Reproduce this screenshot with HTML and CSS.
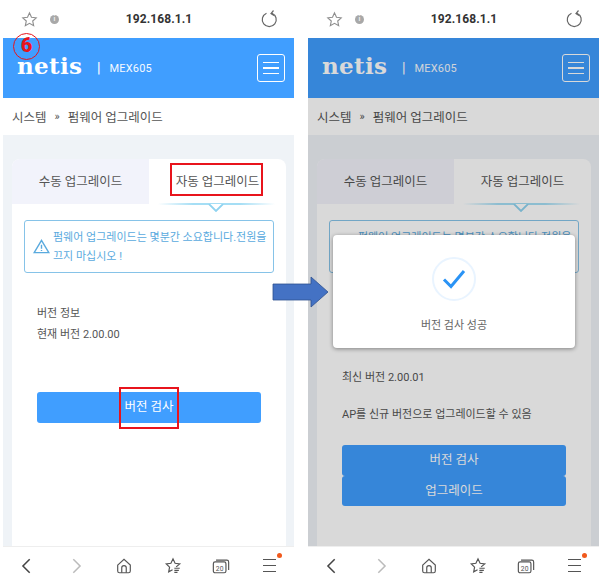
FILE: index.html
```html
<!DOCTYPE html>
<html lang="ko">
<head>
<meta charset="utf-8">
<title>netis MEX605</title>
<link rel="stylesheet" href="styles.css">
</head>
<body>
<div class="stage">
  <section class="phone">
    <div class="chrome">
      <svg class="i-star" viewBox="0 0 18 18"><path d="M9 2l2.100 4.600 5 .6-3.700 3.400 1 4.900L9 13l-4.400 2.500 1-4.900L1.900 7.200l5-.6z"/></svg>
      <span class="info">i</span>
      <span class="url">192.168.1.1</span>
      <svg class="i-reload" viewBox="0 0 18 18"><path d="M6.500 3.200a7 7 0 1 0 5.500 0"/><path d="M13.500 0.500L11 3.500 14 5.500"/></svg>
    </div>
    <header class="header">
      <span class="logo">netis</span>
      <span class="sep">|</span>
      <span class="model">MEX605</span>
      <span class="menu-btn"><i></i><i></i><i></i></span>
    </header>
    <div class="crumbs"><span>시스템</span><span class="raquo">»</span><span>펌웨어 업그레이드</span></div>
    <main class="content">
      <div class="card">
        <div class="tabs">
          <div class="tab tab-off">수동 업그레이드</div>
          <div class="tab">자동 업그레이드</div>
        </div>
        <div class="indicator"><span class="glow"></span><svg class="caret" viewBox="0 0 16 8"><path d="M1 0l7 7 7-7"/></svg></div>
        <div class="notice">
          <svg class="i-warn" viewBox="0 0 18 16"><path d="M9 1.500L1.200 14.500h15.600z"/><path d="M9 6v4.500M9 11.600v1.200"/></svg>
          <p>펌웨어 업그레이드는 몇분간 소요합니다.전원을 끄지 마십시오 !</p>
        </div>
        <div class="info-block">
          <p class="line">버전 정보</p>
          <p class="line line-second">현재 버전 2.00.00</p>
        </div>
        <div class="btn btn-left">버전 검사</div>
      </div>
    </main>
    <nav class="bottom">
      <svg viewBox="0 0 20 20"><path class="thick" d="M13 2.500L5.500 10l7.500 7.500"/></svg>
      <svg viewBox="0 0 20 20"><path class="thick faded" d="M7 2.500l7.500 7.500L7 17.500"/></svg>
      <svg viewBox="0 0 20 20"><path d="M3 9l7-6.500L17 9v6.500a2 2 0 0 1-2 2H5a2 2 0 0 1-2-2z"/><path d="M7.500 17.500V12a2.500 2.500 0 0 1 5 0v5.500"/></svg>
      <svg viewBox="0 0 20 20"><path d="M13.500 11L17.500 7.600 12.300 7 10 2 7.700 7 2.500 7.600 6.200 11.200 5.200 16.500 9.500 14.200"/><path d="M11.500 12.500h6M11.500 14.800h5M11.500 17h3.500"/></svg>
      <svg viewBox="0 0 20 20"><rect x="1.500" y="5.500" width="14" height="12" rx="2"/><path d="M4.500 3.500h12a2 2 0 0 1 2 2v9"/><text x="8.500" y="15" class="tabcount">20</text></svg>
      <span class="burger"><i></i><i></i><i></i><b></b></span>
    </nav>
  </section>

  <section class="phone">
    <div class="chrome">
      <svg class="i-star" viewBox="0 0 18 18"><path d="M9 2l2.100 4.600 5 .6-3.700 3.400 1 4.900L9 13l-4.400 2.500 1-4.900L1.900 7.200l5-.6z"/></svg>
      <span class="info">i</span>
      <span class="url">192.168.1.1</span>
      <svg class="i-reload" viewBox="0 0 18 18"><path d="M6.500 3.200a7 7 0 1 0 5.500 0"/><path d="M13.500 0.500L11 3.500 14 5.500"/></svg>
    </div>
    <header class="header">
      <span class="logo">netis</span>
      <span class="sep">|</span>
      <span class="model">MEX605</span>
      <span class="menu-btn"><i></i><i></i><i></i></span>
    </header>
    <div class="crumbs"><span>시스템</span><span class="raquo">»</span><span>펌웨어 업그레이드</span></div>
    <main class="content">
      <div class="card">
        <div class="tabs">
          <div class="tab tab-off">수동 업그레이드</div>
          <div class="tab">자동 업그레이드</div>
        </div>
        <div class="indicator"><span class="glow"></span><svg class="caret" viewBox="0 0 16 8"><path d="M1 0l7 7 7-7"/></svg></div>
        <div class="notice">
          <svg class="i-warn" viewBox="0 0 18 16"><path d="M9 1.500L1.200 14.500h15.600z"/><path d="M9 6v4.500M9 11.600v1.200"/></svg>
          <p>펌웨어 업그레이드는 몇분간 소요합니다.전원을 끄지 마십시오 !</p>
        </div>
        <div class="info-block info-right">
          <p class="line">최신 버전 2.00.01</p>
          <p class="line line-ap">AP를 신규 버전으로 업그레이드할 수 있음</p>
        </div>
        <div class="btn btn-right">버전 검사</div>
        <div class="btn btn-right">업그레이드</div>
      </div>
    </main>
    <nav class="bottom">
      <svg viewBox="0 0 20 20"><path class="thick" d="M13 2.500L5.500 10l7.500 7.500"/></svg>
      <svg viewBox="0 0 20 20"><path class="thick faded" d="M7 2.500l7.500 7.500L7 17.500"/></svg>
      <svg viewBox="0 0 20 20"><path d="M3 9l7-6.500L17 9v6.500a2 2 0 0 1-2 2H5a2 2 0 0 1-2-2z"/><path d="M7.500 17.500V12a2.500 2.500 0 0 1 5 0v5.500"/></svg>
      <svg viewBox="0 0 20 20"><path d="M13.500 11L17.500 7.600 12.300 7 10 2 7.700 7 2.500 7.600 6.200 11.200 5.200 16.500 9.500 14.200"/><path d="M11.500 12.500h6M11.500 14.800h5M11.500 17h3.500"/></svg>
      <svg viewBox="0 0 20 20"><rect x="1.500" y="5.500" width="14" height="12" rx="2"/><path d="M4.500 3.500h12a2 2 0 0 1 2 2v9"/><text x="8.500" y="15" class="tabcount">20</text></svg>
      <span class="burger"><i></i><i></i><i></i><b></b></span>
    </nav>
    <div class="overlay"></div>
    <div class="modal">
      <span class="check-ring"><svg viewBox="0 0 24 20"><path d="M2 10.500l7 7L22 2"/></svg></span>
      <p>버전 검사 성공</p>
    </div>
  </section>

  <span class="mark mark-tab"></span>
  <span class="mark mark-btn"></span>
  <span class="step">6</span>
  <svg class="arrow" viewBox="0 0 58 32"><path d="M1 8h38V1l17 15-17 15v-7H1z"/></svg>
</div>
</body>
</html>
```

FILE: styles.css
```css
* { box-sizing: border-box; }
html, body { margin: 0; padding: 0; background: #fff; }
body {
  font-family: "Roboto", "Noto Sans CJK KR", sans-serif;
  color: #555;
}
p { margin: 0; }

.stage {
  position: relative;
  display: flex;
  gap: 14px;
  width: 600px;
  height: 584px;
  padding-left: 3px;
  overflow: hidden;
}
.phone {
  position: relative;
  display: flex;
  flex-direction: column;
  width: 291px;
  height: 584px;
}

/* browser top bar */
.chrome {
  display: flex;
  align-items: center;
  height: 38px;
  padding-left: 18px;
}
.i-star { width: 17px; height: 17px; fill: none; stroke: #8e8e8e; stroke-width: 1.2; }
.info {
  width: 9px; height: 9px; margin-left: 12px;
  border-radius: 50%;
  background: #a8a8a8; color: #eee;
  font-size: 7px; line-height: 9px; text-align: center; font-weight: 700;
}
.url {
  flex: 1;
  margin-right: 1px;
  text-align: center;
  font: 700 12px/38px "Roboto", sans-serif;
  color: #333;
  letter-spacing: .1px;
}
.i-reload { width: 18px; height: 18px; margin-right: 16px; fill: none; stroke: #666; stroke-width: 1.2; }

/* site header */
.header {
  display: flex;
  align-items: center;
  height: 60px;
  padding: 0 9px 0 14px;
  background: #409eff;
  color: #fff;
}
.logo {
  width: 68px;
  font: 700 23px/14px "DejaVu Serif", serif;
  letter-spacing: .3px;
  margin-top: -5px;
}
.sep { margin-left: 12px; font: 500 14px/1 "Roboto", sans-serif; }
.model { margin-left: 9px; font: 400 11px/1 "Roboto", sans-serif; letter-spacing: .2px; opacity: .95; }
.menu-btn {
  display: flex; flex-direction: column; justify-content: center; gap: 4px;
  width: 28px; height: 28px;
  margin-left: auto;
  padding: 0 5px;
  border: 1.500px solid #fff;
  border-radius: 3px;
}
.menu-btn i { display: block; height: 1.500px; background: #fff; }

.crumbs {
  display: flex;
  align-items: center;
  gap: 8px;
  height: 37px;
  padding-left: 9px;
  background: #fff;
  font-size: 12.5px;
  color: #555;
}
.raquo { font-size: 11px; }

.content {
  flex: 1;
  min-height: 0;
  padding: 24px 8px 0 9px;
  background: #eff3f7;
}
.card {
  position: relative;
  height: 100%;
  padding: 0 12px;
  border-radius: 8px 8px 0 0;
  background: #fff;
  overflow: hidden;
}
.tabs { display: flex; height: 45px; margin: 0 -12px; }
.tab {
  flex: 1;
  text-align: center;
  font-size: 12.500px;
  line-height: 45px;
  color: #555;
}
.tab-off { flex: 0 0 137px; background: #f2f3fb; }

.indicator { position: absolute; left: 146px; top: 44px; width: 117px; height: 12px; }
.glow {
  display: block;
  height: 2px;
  background: linear-gradient(90deg, transparent, #a5def5 30%, #a5def5 70%, transparent);
}
.caret {
  position: absolute; left: 50px; top: 1px;
  width: 16px; height: 8px;
  fill: #fff; stroke: #8fd3f0; stroke-width: 1.800;
}

.notice {
  display: flex;
  align-items: center;
  gap: 3px;
  height: 53px;
  margin-top: 16px;
  padding: 0 4px 0 8px;
  border: 1px solid #86c3e8;
  border-radius: 3px;
  color: #5aaade;
  font-size: 11px;
  line-height: 19px;
}
.i-warn { flex: none; width: 17px; height: 15px; fill: none; stroke: #5aaade; stroke-width: 1.500; }

.info-block { margin-top: 32px; padding-left: 13px; font-size: 11px; color: #555; }
.line { line-height: 18px; }
.line-second { margin-top: 3px; }
.info-right { margin-top: 96px; }
.line-ap { margin-top: 19px; }

.btn {
  margin: 0 13px;
  height: 31px;
  border-radius: 3px;
  background: #409eff;
  color: #fff;
  text-align: center;
  font-size: 12.500px;
  line-height: 30px;
}
.btn-left { margin-top: 48px; }
.btn-right { height: 30px; }
.info-right + .btn { margin-top: 21px; height: 31px; }

/* bottom bar */
.bottom {
  display: grid;
  grid-template-columns: repeat(6, 1fr);
  justify-items: center;
  align-items: center;
  height: 38px;
  border-top: 1px solid #eee;
  background: #fff;
}
.bottom svg { width: 18px; height: 18px; fill: none; stroke: #555; stroke-width: 1.300; }
.bottom .thick { stroke-width: 1.700; stroke: #444; }
.bottom .faded { stroke: #bbb; }
.tabcount { font: 400 7.500px "Roboto", sans-serif; fill: #555; stroke: none; text-anchor: middle; }
.burger { position: relative; display: flex; flex-direction: column; gap: 4.500px; width: 13px; }
.burger i { display: block; height: 1.500px; background: #555; }
.burger b {
  position: absolute; left: 14px; top: -6px;
  width: 5px; height: 5px; border-radius: 50%;
  background: #f1591c;
}

/* overlay and dialog on the right phone */
.overlay {
  position: absolute; left: 0; right: 0; top: 38px; bottom: 38px;
  background: rgba(0, 0, 0, .15);
}
.modal {
  position: absolute; left: 25px; top: 235px;
  display: flex; flex-direction: column; align-items: center;
  width: 242px; height: 113px;
  padding-top: 22px;
  border-radius: 4px;
  background: #fff;
  box-shadow: 0 1px 4px rgba(0, 0, 0, .4);
}
.check-ring {
  display: flex; align-items: center; justify-content: center;
  width: 44px; height: 44px;
  border: 2px solid #e9f4ff;
  border-radius: 50%;
}
.check-ring svg { width: 26px; height: 20px; fill: none; stroke: #2a93f5; stroke-width: 3; }
.modal p { margin-top: 16px; font-size: 11px; line-height: 18px; color: #666; }

/* annotations */
.mark { position: absolute; border: 2px solid #e8141c; }
.mark-tab { left: 170px; top: 163px; width: 93px; height: 33px; }
.mark-btn { left: 119px; top: 387px; width: 60px; height: 42px; }
.step {
  position: absolute; left: 13px; top: 33px;
  width: 27px; height: 27px;
  border: 1.800px solid #e8141c;
  border-radius: 50%;
  color: #e8141c;
  font: 900 20px/23px "Roboto", sans-serif;
  text-align: center;
}
.arrow { position: absolute; left: 272px; top: 276px; width: 58px; height: 32px; fill: #4472c4; stroke: #2f528f; stroke-width: .8; }
```
